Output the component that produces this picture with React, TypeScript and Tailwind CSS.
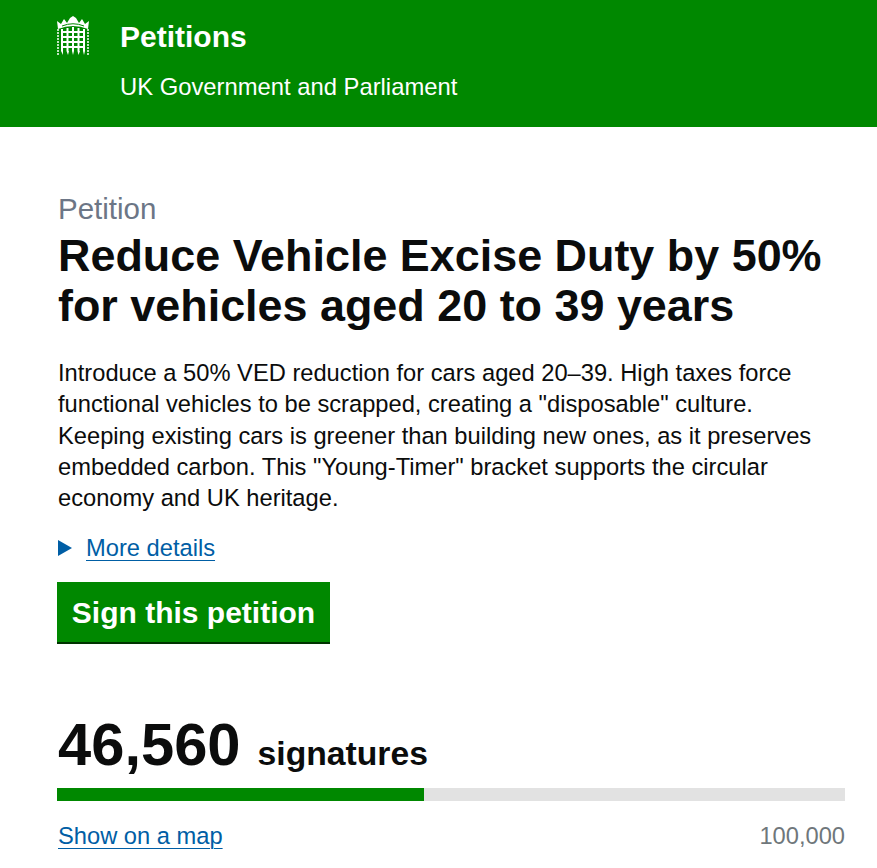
const Portcullis = () => (
  <svg width="36" height="42" viewBox="0 0 36 42" fill="#fff" aria-hidden="true" className="-ml-px">
    {/* crown */}
    <path d="M2 6 L6 9 L9 4 L12 8 L15 3 L18 1 L21 3 L24 8 L27 4 L30 9 L34 6 L33 14 Q18 8 3 14 Z" />
    <path d="M7 11 Q18 6.5 29 11" fill="none" stroke="#008800" strokeWidth="1" />
    {/* chains */}
    <g fill="none" stroke="#fff" strokeWidth="1.5" strokeDasharray="2 1">
      <path d="M3 14V40M33 14V40" />
    </g>
    {/* gate */}
    <g fill="none" stroke="#fff" strokeWidth="2">
      <path d="M7 14V36M12.5 13V36M18 12V36M23.5 13V36M29 14V36" />
      <path d="M6 17H30M6 22H30M6 27H30M6 32H30" />
    </g>
    <path d="M6 36 L8 40 L8 36 Z M11.5 36 L13 40 L14 36 Z M17 36 L18 40 L19 36 Z M22.5 36 L23.5 40 L25 36 Z M28 36 L29 40 L30 36 Z" />
  </svg>
);

export default function App() {
  return (
    <div className="min-h-[868px] bg-white text-[#0b0c0c] font-['Liberation_Sans',Arial,sans-serif] overflow-hidden">
      <header className="h-[127px] bg-[#008800] text-white pl-[56px] pt-[15px] flex gap-[29px]">
        <Portcullis />
        <div>
          <div className="text-[30px] leading-[44px] font-bold">Petitions</div>
          <div className="text-[23.8px] leading-[30px] mt-[13px]">UK Government and Parliament</div>
        </div>
      </header>
      <main className="pl-[58px] pr-[32px] pt-[64px]">
        <div className="text-[29.5px] leading-[36px] text-[#6c7686]">Petition</div>
        <h1 className="text-[44.9px] leading-[50px] font-bold mt-[4px]">
          Reduce Vehicle Excise Duty by 50%
          <br />
          for vehicles aged 20 to 39 years
        </h1>
        <p className="text-[23.7px] leading-[31.25px] mt-[27px] max-w-[770px]">
          Introduce a 50% VED reduction for cars aged 20–39. High taxes force functional vehicles to be scrapped, creating a "disposable" culture. Keeping existing cars is greener than building new ones, as it preserves embedded carbon. This "Young-Timer" bracket supports the circular economy and UK heritage.
        </p>
        <div className="flex items-center gap-[14px] mt-[18px] text-[23.7px] leading-[32px] text-[#005ea5]">
          <span className="w-0 h-0 border-y-[8px] border-y-transparent border-l-[14px] border-l-[#005ea5]"></span>
          <span className="underline underline-offset-[4px] decoration-1">More details</span>
        </div>
        <button className="block -ml-px mt-[18px] h-[62px] w-[273px] bg-[#008800] border-b-2 border-[#003300] text-white text-[30px] font-bold">
          Sign this petition
        </button>
        <div className="flex items-baseline gap-[17px] mt-[66px]">
          <span className="text-[59.7px] leading-[70px] font-bold">46,560</span>
          <span className="text-[33.7px] font-bold">signatures</span>
        </div>
        <div className="-ml-px h-[13px] mt-[8px] bg-[#e2e2e2]">
          <div className="h-full w-[46.56%] bg-[#008800]"></div>
        </div>
        <div className="flex justify-between mt-[19px] text-[23.7px] leading-[32px]">
          <span className="text-[#005ea5] underline underline-offset-[4px] decoration-1">Show on a map</span>
          <span className="text-[#6f777b]">100,000</span>
        </div>
      </main>
    </div>
  );
}
